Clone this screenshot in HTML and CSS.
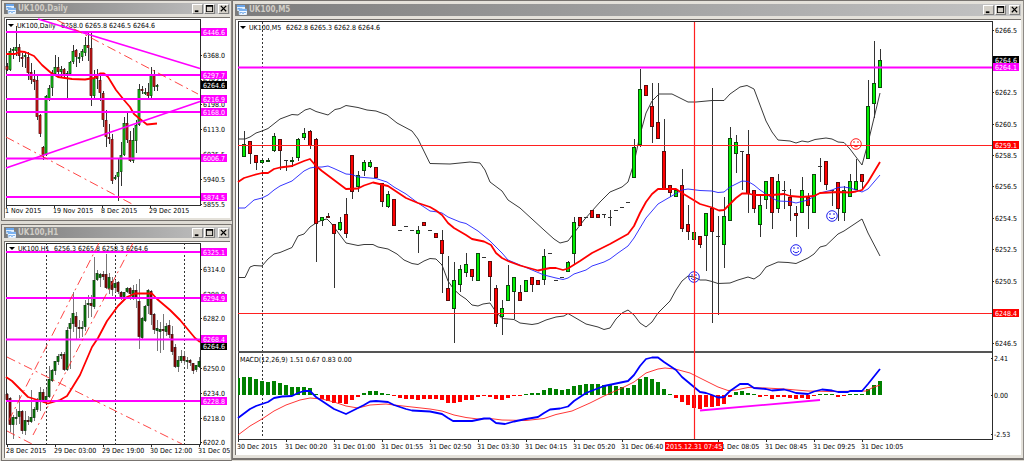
FILE: index.html
```html
<!DOCTYPE html>
<html lang="en">
<head>
<meta charset="utf-8">
<title>UK100 charts</title>
<link rel="stylesheet" href="styles.css">
</head>
<body>
<svg class="defs" aria-hidden="true">
  <symbol id="icon-chart" viewBox="0 0 10 10">
    <rect x="0" y="0" width="8" height="6" rx="1" fill="#e8f2fc"/>
    <rect x="0" y="0" width="8" height="2" fill="#6ba6ea"/>
    <path d="M1 5V3l1 1 1-1 1 2 1-2" fill="none" stroke="#6ba6ea"/>
    <rect x="2" y="4" width="8" height="6" rx="1" fill="#f4f9ff" stroke="#b4d4f4" stroke-width=".5"/>
    <rect x="2" y="4" width="8" height="2" fill="#7bb2f0"/>
    <path d="M3 9V7l1 1 1-1 1 2 1-2 1 1 1-1" fill="none" stroke="#6ba6ea" stroke-width=".8"/>
  </symbol>
  <symbol id="icon-min" viewBox="0 0 10 9"><path d="M2 6h4v2H2z"/></symbol>
  <symbol id="icon-max" viewBox="0 0 10 9"><path d="M1 0h8v8H1zM2 2v5h6V2z" fill-rule="evenodd"/></symbol>
  <symbol id="icon-close" viewBox="0 0 10 9"><path d="M2 1l6 6M8 1L2 7" stroke="#000" stroke-width="1.4" fill="none"/></symbol>
  <symbol id="smile" viewBox="0 0 12 12">
    <circle cx="6" cy="6" r="5.3" fill="none" stroke="currentColor"/>
    <path d="M4 3v2M8 3v2" stroke="currentColor"/>
    <path d="M3 7q3 3.5 6 0" fill="none" stroke="currentColor"/>
  </symbol>
</svg>
<main class="workspace">
  <div class="column">
    <section class="window">
      <header class="titlebar">
        <svg class="app-icon" aria-hidden="true"><use href="#icon-chart"/></svg>
        <h2 class="title">UK100,Daily</h2>
        <button class="control" aria-label="Minimize"><svg><use href="#icon-min"/></svg></button>
        <button class="control" aria-label="Maximize"><svg><use href="#icon-max"/></svg></button>
        <button class="control close" aria-label="Close"><svg><use href="#icon-close"/></svg></button>
      </header>
      <div class="client"><svg class="chart" id="daily" viewBox="5 18 225 200"></svg></div>
    </section>
    <section class="window">
      <header class="titlebar">
        <svg class="app-icon" aria-hidden="true"><use href="#icon-chart"/></svg>
        <h2 class="title">UK100,H1</h2>
        <button class="control" aria-label="Minimize"><svg><use href="#icon-min"/></svg></button>
        <button class="control" aria-label="Maximize"><svg><use href="#icon-max"/></svg></button>
        <button class="control close" aria-label="Close"><svg><use href="#icon-close"/></svg></button>
      </header>
      <div class="client"><svg class="chart" id="hourly" viewBox="5 242 225 216"></svg></div>
    </section>
  </div>
  <section class="window wide">
    <header class="titlebar">
      <svg class="app-icon" aria-hidden="true"><use href="#icon-chart"/></svg>
      <h2 class="title">UK100,M5</h2>
      <button class="control" aria-label="Minimize"><svg><use href="#icon-min"/></svg></button>
      <button class="control" aria-label="Maximize"><svg><use href="#icon-max"/></svg></button>
      <button class="control close" aria-label="Close"><svg><use href="#icon-close"/></svg></button>
    </header>
    <div class="client"><svg class="chart" id="minutes" viewBox="236 20 785 435"></svg></div>
  </section>
</main>
<script src="charts.js"></script>
</body>
</html>
```

FILE: styles.css
```css
* { box-sizing: border-box; }

body {
  margin: 0;
  background: #dedbd4;
  font-family: "DejaVu Sans Condensed", "DejaVu Sans", sans-serif;
  font-size: 7px;
  color: #000;
}

.defs { position: absolute; width: 0; height: 0; }

.workspace {
  display: grid;
  grid-template-columns: 232fr 792fr;
  align-items: start;
}

.column {
  display: flex;
  flex-direction: column;
  gap: 3px;
  padding-left: 1px;
}

.window {
  padding: 2px 1px 2px 2px;
  background: #e4e1da;
  border: 1px solid #77736f;
  border-right-color: #8c8985;
}

.wide {
  padding: 3px 2px 3px 2px;
  border-bottom-width: 2px;
}

.titlebar {
  display: flex;
  align-items: center;
  height: 11px;
  margin-bottom: 3px;
  padding: 0 1px 0 2px;
  background: linear-gradient(90deg, #7c7c7c, #c4c4c4);
}

.wide .titlebar { height: 12px; }

.app-icon { width: 10px; height: 10px; margin-right: 2px; }

.title {
  flex: 1;
  margin: 0;
  font-size: 8px;
  line-height: 10px;
  font-weight: bold;
  color: #d0cdc6;
}

.control {
  width: 11px;
  height: 10px;
  padding: 0;
  border: 1px solid;
  border-color: #fff #808080 #808080 #fff;
  background: #d4d0c8;
  line-height: 0;
}

.control svg { width: 100%; height: 100%; }
.control + .control { margin-left: 1px; }
.control.close { margin-left: 3px; }

.client {
  background: #fff;
  border-top: 1px solid #77736f;
  border-left: 1px solid #77736f;
}

.chart { display: block; width: 100%; height: auto; }
.chart text { font-size: 7px; fill: #000; white-space: pre; }
.chart text.light { fill: #fff; }

.frame { fill: none; stroke: #2c2c2c; shape-rendering: crispEdges; }
.tick { stroke: #2c2c2c; shape-rendering: crispEdges; }
.divider { stroke: #555; stroke-width: 2; }
.session { stroke: #333; stroke-dasharray: 2 2; shape-rendering: crispEdges; }
.line { fill: none; stroke-linejoin: round; }
.band { stroke: #222; stroke-width: 0.9; }
.fast { stroke: #ff0000; stroke-width: 1.8; }
.slow { stroke: #2020ff; stroke-width: 0.9; }
.macd { stroke: #0000ff; stroke-width: 1.8; }
.signal { stroke: #ff2020; stroke-width: 0.9; }
.level { stroke: #ff00ff; stroke-width: 1.8; }
.stop { stroke: #ff2020; stroke-width: 1.2; }
.channel { stroke: #ff3030; stroke-width: 0.9; stroke-dasharray: 9 4 2 4; fill: none; }
.buy { color: #2020f0; }
.sell { color: #ff2020; }

.wick { stroke: #333; shape-rendering: crispEdges; }
.soft .wick { stroke: #777; }
.up { fill: #00f000; stroke: #0c4a0c; }
.down { fill: #ff0000; stroke: #5a0c0c; }
.narrow .up { fill: #18d818; stroke-width: 0.8; }
.narrow .down { fill: #e01818; stroke-width: 0.8; }
.soft .up { fill: #008a00; stroke: #103810; }
.soft .down { fill: #a00000; stroke: #381010; }
.bar-up { fill: #008000; }
.bar-down { fill: #ff0000; }
```

FILE: charts.js
```js
const NS = 'http://www.w3.org/2000/svg';

function add(parent, tag, attrs, text) {
  const el = document.createElementNS(NS, tag);
  for (const key in attrs) el.setAttribute(key, attrs[key]);
  if (text !== undefined) el.textContent = text;
  parent.appendChild(el);
  return el;
}

const seg = (svg, cls, x1, y1, x2, y2) => add(svg, 'line', { class: cls, x1, y1, x2, y2 });
const curve = (svg, cls, points) => add(svg, 'polyline', { class: 'line ' + cls, points });
const label = (svg, x, y, text, cls) => add(svg, 'text', { x, y: y + 3, class: cls || '' }, text);

// Rows hold: high, body top, body bottom, low, kind (g, r, or d for no body).
function candles(svg, startX, step, half, cls, rows) {
  const g = add(svg, 'g', { class: cls });
  rows.trim().split('|').forEach((row, i) => {
    const [hi, top, bottom, low, kind] = row.trim().split(/\s+/);
    const x = startX + i * step;
    if (hi !== low) seg(g, 'wick', x, +hi, x, +low);
    if (kind === 'd') seg(g, 'wick', x - 2, +top, x + 2, +top);
    else add(g, 'rect', { class: kind === 'g' ? 'up' : 'down', x: x - half, y: +top + 0.5,
      width: half * 2, height: Math.max(bottom - top - 1, 1) });
  });
}

function frame(svg, x, y, right, bottom) {
  add(svg, 'rect', { class: 'frame', x, y, width: right - x, height: bottom - y });
}

// Axis entries: [y, text, optional box colour]; later entries cover earlier ones.
function axis(svg, x, width, entries) {
  entries.forEach(([y, text, fill]) => {
    if (fill) add(svg, 'rect', { x: x + 1, y: y - 4, width, height: 8, fill });
    else seg(svg, 'tick', x, y, x + 2, y);
    label(svg, x + 3, y, text, fill ? 'light' : '');
  });
}

function times(svg, y, frameY, entries) {
  entries.forEach(([x, text]) => {
    seg(svg, 'tick', x + 1, frameY, x + 1, frameY + 3);
    label(svg, x, y, text);
  });
}

function heading(svg, x, y, name, valuesX, values) {
  add(svg, 'path', { d: `M${x} ${y - 1}h6l-3 3z` });
  label(svg, x + 9, y, name);
  label(svg, valuesX, y, values);
}

const PINK = '#ff00ff', BLACK = '#000', RED = '#ff0000';

function daily() {
  const s = document.getElementById('daily');
  frame(s, 6, 19, 200, 205);
  candles(s, 7, 3, 1, 'narrow', `63 66 70 71 r|48 51 70 71 g|47 49 51 59 g|26 47 51 56 g|44 47 56 62 r|53 57 59 67 r|52 55 57 68 g|
52 57 73 80 r|63 72 80 84 r|70 79 82 90 r|75 80 117 120 r|114 115 134 137 r|146 147 155 160 r|95 96 155 156 g|85 88 99 101 g|
70 73 88 96 g|55 67 74 75 g|57 67 72 75 r|66 69 72 77 g|68 69 74 78 r|71 73 74 98 g|61 62 74 75 g|45 51 62 64 g|49 50 57 67 r|
53 57 59 63 g|49 51 57 61 g|37 45 53 56 g|33 45 48 61 r|33 48 96 106 r|70 78 96 98 g|69 75 79 89 r|75 80 93 101 r|91 93 120 127 r|
110 120 137 147 r|124 137 139 144 r|134 139 181 184 r|175 177 179 180 g|159 172 177 201 g|142 155 172 186 g|117 123 155 156 g|
112 123 140 143 r|131 140 161 162 r|128 140 161 163 g|120 125 141 153 g|84 89 125 126 g|86 89 91 94 r|88 92 94 95 g|83 92 96 98 r|
67 75 96 98 g|70 75 87 91 r|84 85 87 91 g`);
  curve(s, 'fast', '6,54 15,54 20,51.5 25,52 34,56 42,65 50,72 58,77 72,79 85,79.5 94,78 100,73.5 104,73.5 108,77 116,90 124,100 130,107 134,114 140,119 147,124.5 157,123.5');
  heading(s, 8, 25, 'UK100,Daily', 61, '6258.0 6265.8 6246.5 6264.6');
  [32, 75, 99, 112, 158.5, 197].forEach(y => seg(s, 'level', 6, y, 200, y));
  seg(s, 'level', 38, 19, 200, 68.5);
  seg(s, 'level', 6, 168, 200, 101.5);
  seg(s, 'channel', 57, 20, 198, 94);
  seg(s, 'channel', 6, 137, 132, 204);
  axis(s, 200, 26, [[55, '6368.0'], [80, '6283.0'], [104, '6198.0'], [129, '6113.0'], [154, '6025.5'], [179, '5940.5'], [204, '5855.5'],
    [32, '6446.6', PINK], [75, '6297.7', PINK], [85, '6264.6', BLACK], [99, '6216.9', PINK], [112, '6168.0', PINK],
    [158, '6006.7', PINK], [197, '5874.5', PINK]]);
  times(s, 210, 205, [[5, '1 Nov 2015'], [53, '19 Nov 2015'], [101, '8 Dec 2015'], [149, '29 Dec 2015']]);
}

function hourly() {
  const s = document.getElementById('hourly');
  frame(s, 6, 243, 200, 444);
  [46, 115, 184].forEach(x => seg(s, 'session', x, 243, x, 444));
  candles(s, 7, 3, 1, 'narrow soft', `393 394 400 400 r|397 398 425 432 r|415 417 425 439 g|409 417 418 425 g|395 411 417 424 g|
410 411 431 434 r|411 420 431 435 g|416 420 422 425 r|390 417 422 423 g|407 409 418 421 g|398 402 410 412 g|387 392 401 411 g|
389 392 400 403 r|389 396 401 403 g|366 379 397 398 g|369 370 381 382 g|361 361 371 375 g|354 356 362 365 g|352 354 356 359 g|
352 354 370 371 r|327 330 370 371 g|318 323 329 369 g|292 313 324 332 g|312 316 327 340 r|320 327 329 338 r|321 327 329 337 g|
300 305 327 331 g|295 303 305 318 g|295 303 306 317 r|257 280 307 309 g|270 273 280 281 g|273 274 278 287 g|271 274 277 280 r|
254 274 288 289 r|273 277 289 294 g|277 281 290 296 r|280 283 288 292 g|281 282 292 294 r|291 292 297 300 r|292 292 297 299 g|
287 288 292 293 g|287 288 294 300 r|285 290 298 300 g|284 290 299 308 r|279 301 337 349 r|317 318 338 340 g|305 306 321 322 g|
289 290 306 314 g|290 291 315 325 r|313 314 330 334 r|320 328 331 351 g|322 329 332 353 g|314 329 331 350 r|323 326 332 336 g|
320 325 335 338 r|326 334 352 355 r|344 347 367 368 r|356 360 367 372 g|350 356 361 363 g|351 356 361 365 r|357 360 362 369 g|
359 360 363 366 r|363 363 371 374 r|365 365 370 372 g|357 361 367 368 g`);
  curve(s, 'fast', '6,377 12,381 20,389 28,397 36,399.5 48,403.5 60,400 67,396 72,388 80,375 86,361 92,347 98,338 107,321 118,306 127,297 135,293.5 152,293.5 157,299 170,310 180,320 195,338 200,342');
  heading(s, 9, 248, 'UK100,H1', 54, '6256.3 6265.8 6258.3 6264.6');
  [252, 298, 339.5, 401].forEach(y => seg(s, 'level', 6, y, 200, y));
  seg(s, 'channel', 99, 243, 7, 424);
  seg(s, 'channel', 133, 243, 33, 435);
  seg(s, 'channel', 7, 357, 182, 444);
  seg(s, 'channel', 7, 431, 32, 444);
  axis(s, 200, 26, [[269, '6314.0'], [294, '6298.0'], [318, '6282.0'], [368, '6250.0'], [393, '6234.0'], [418, '6218.0'], [442, '6202.0'],
    [252, '6325.1', PINK], [298, '6294.9', PINK], [346, '6264.6', BLACK], [339, '6268.4', PINK], [401, '6228.8', PINK]]);
  times(s, 450, 444, [[6, '28 Dec 2015'], [54, '29 Dec 03:00'], [102, '29 Dec 19:00'], [150, '30 Dec 12:00'], [198, '31 Dec 05']]);
}

function minutes() {
  const s = document.getElementById('minutes');
  frame(s, 238, 21, 992, 439);
  seg(s, 'session', 262, 22, 262, 438);
  seg(s, 'tick', 238, 109, 238, 172);
  curve(s, 'band', '238,139 245,139 250,137 256,133 262,131 268,128.5 280,119 292,114.5 298,115 305,110 310,108.5 316,111.5 328,115 335,109.5 340,108.5 346,105.5 358,107.5 367,110 376,111 387,115 397,123 412,131 418,139 430,163.5 450,164 470,162 480,163 485,170 490,182 502,191 508,200 520,208 532,219 544,230 554,239 560,243 568,241 574,233 584,220 592,211 600,202 610,192 622,187 628,182 634,163 640,135 646,113 652,101 659,94 672,94 680,98 688,102 696,102 712,100.5 724,100.5 730,94 740,87 747,85.5 754,89 760,105 766,121 772,132 778,140 790,141 796,143 802,141 808,142 815,139.5 826,138 832,139 838,142 844,142.5 850,149 862,165 868,143 880,93');
  curve(s, 'band', '238,277.5 245,277.5 250,267 254,265.5 262,266 268,259 274,254 280,252.5 292,247.5 298,236 304,234 310,227 316,223 322,220 327,219 331,223 346,243 358,245.5 364,244.5 373,244.5 378,247 388,249 397,254 404,260 412,263.5 418,264.5 424,261 430,258.5 436,259 442,265 448,281 454,289.5 460,295 466,299 472,305 478,306 483,304 490,303 496,312 502,318.5 514,319.5 520,323 532,324.5 538,323.5 546,320 556,317 564,316 568,313.5 574,317 586,324 598,327 604,329.5 610,328 616,319 622,313 628,310 634,315 640,323 646,327 652,322 658,313 670,301 676,290 682,281 688,276 694,277 700,280 706,280 712,281.5 718,283.5 730,283 738,280 748,277 754,279 760,275 766,267 778,262 788,262.5 796,263.5 808,258 814,254 820,247 826,245.5 838,234 844,231 862,219 868,233 880,256');
  candles(s, 244, 6, 1.5, '', `131 144 157 157 g|141 141 154 164 r|155 155 163 170 r|159 160 163 163 g|158 160 162 162 g|133 136 151 152 g|
139 139 151 170 r|160 160 160 171 d|157 160 162 167 g|138 139 158 161 g|128 133 138 140 g|130 131 146 149 r|138 139 224 262 r|
217 217 221 226 g|213 216 218 218 r|224 224 234 288 r|217 222 230 231 g|198 214 234 238 r|155 155 192 199 r|171 175 187 192 g|
160 162 171 176 g|160 162 167 168 g|167 167 178 178 r|183 183 202 207 r|191 194 207 208 g|199 199 226 226 r|230 230 230 230 d|
226 226 226 226 d|230 230 230 230 d|226 230 234 253 g|222 222 226 226 r|230 230 230 230 d|233 233 238 238 r|230 240 254 293 r|
256 288 301 301 r|262 280 309 343 g|265 269 285 292 g|253 264 273 277 g|269 269 277 281 r|253 253 281 281 g|257 257 257 257 d|
261 261 277 301 r|285 288 324 327 r|300 308 317 335 g|265 285 301 301 g|277 277 292 319 g|285 292 301 301 r|280 280 292 292 g|
277 277 285 292 r|280 280 285 285 r|249 256 280 285 g|253 253 253 253 d|280 280 280 280 d|277 277 277 277 d|261 262 272 272 g|
217 222 254 264 g|217 217 226 226 r|217 217 217 217 d|210 210 218 218 r|214 214 218 218 r|214 214 214 218 d|210 217 217 226 d|
210 210 210 210 d|207 207 207 207 d|202 202 202 202 d|139 147 178 178 g|69 89 145 147 g|85 85 96 96 r|83 106 127 143 r|
83 122 139 139 r|119 151 190 190 r|185 185 193 197 r|190 190 197 197 g|169 185 229 232 r|205 224 232 240 r|232 232 240 240 g|
236 236 245 248 r|213 213 236 271 g|88 208 232 323 r|216 236 236 315 d|197 216 245 268 g|127 138 221 221 g|135 142 154 173 g|
151 151 151 190 d|130 154 194 213 r|190 190 209 213 r|194 205 225 237 g|181 181 200 209 g|177 177 213 229 r|174 181 209 213 g|
181 190 190 209 d|189 197 206 221 r|206 213 216 237 r|177 190 213 213 g|193 197 206 229 r|174 174 213 213 g|158 166 166 182 d|
161 161 185 190 r|190 190 190 206 d|182 182 209 221 r|186 190 213 221 g|174 181 197 197 g|159 181 190 190 g|174 174 182 189 r|
80 106 159 159 g|41 83 104 118 g|49 60 88 88 g`);
  curve(s, 'slow', '238,208 245,208 254,200 262,198 268,195 274,190 280,186 292,181 298,176 304,171 310,168 316,167 322,167 328,166 334,168.5 346,174 352,174.5 358,177 376,178.5 387,182 394,187 406,194 418,203 430,211 438,212 442,213 448,217 460,222 466,223.5 478,231 490,241 502,253 508,260 520,265 532,270 544,275 556,278 563,279.5 568,278 574,274 586,270 592,266 604,262 610,259 618,253 628,246 634,238 646,218 658,204 670,197 682,190 688,189 700,190.5 712,191 718,192.5 724,192 730,187 742,181 748,181.5 754,185 760,190 772,198 778,201 790,201.5 796,203 808,200 820,193 832,190 838,187.5 844,187 850,188 856,190 862,192 868,189 880,175');
  curve(s, 'fast', '238,182 244,178 254,175 262,173 268,173 274,169 280,167.5 292,166 298,163.5 304,161 310,159 316,166 322,171 334,180 346,189 358,188.5 364,185.5 373,182.5 388,186 394,190 406,198 418,203 430,207 436,210.5 442,215 448,223 454,228 466,235 472,239 484,241.5 491,245 496,253 502,258 508,261 520,265.5 538,270.5 550,268 556,268 563,270 568,268.5 580,261 592,253 600,249 610,244 628,234 634,226 640,213 646,202 652,194 658,189 676,189 682,193 700,204 712,207.5 719,210.5 724,210 730,204 736,198 742,193.5 748,193.5 754,195 772,195 784,194 790,196 802,197 814,196 820,193 838,192 850,192.5 856,191.5 862,190 868,182 880,162');
  seg(s, 'level', 238, 67.5, 992, 67.5);
  seg(s, 'stop', 238, 145.5, 992, 145.5);
  seg(s, 'stop', 238, 313.5, 992, 313.5);
  [[694, 277, 'buy'], [796, 250, 'buy'], [832, 216, 'buy'], [856, 144, 'sell']].forEach(([x, y, cls]) =>
    add(s, 'use', { href: '#smile', x: x - 6, y: y - 6, width: 12, height: 12, class: cls }));
  heading(s, 240, 27, 'UK100,M5', 286, '6262.8 6265.3 6262.8 6264.6');

  // MACD pane: histogram edges are measured against the zero line.
  const zero = 395;
  [378,377,377,379,381,382,381,383,385,387,387,387,388,394,399,401,403,403,404,400,397,393,391,391,393,394,396,398,399,399,400,399,
   399,399,400,403,403,402,400,400,397,396,397,399,400,398,396,396,394,393,393,390,388,389,390,389,386,385,384,384,384,385,385,386,
   387,388,385,379,377,379,382,389,394,398,402,405,408,409,407,407,406,404,397,392,391,393,394,397,396,399,397,397,398,399,398,399,
   396,394,394,394,397,396,394,394,394,389,385,381].forEach((v, i) => {
    const x = Math.max(238 + i * 6 - 2, 238);
    add(s, 'rect', { class: v < zero ? 'bar-up' : 'bar-down', x, y: Math.min(v, zero), width: i ? 4 : 2, height: Math.abs(v - zero) });
  });
  curve(s, 'signal', '238,435 250,426 262,419 274,411 286,405 300,400 310,398 322,399 334,402 346,406 358,408 370,405 386,404 394,405 412,407 430,409 442,411 454,415 466,417.5 478,419 490,418.5 502,420 526,420.5 544,418.5 556,414.5 572,411 590,403 604,396 622,388 634,382 646,373 658,369 665,368 675,369 690,373 706,381 718,387 728,390.5 736,390 748,387.5 766,388 784,389 808,391 832,391.5 866,391 874,387 880,385');
  curve(s, 'macd', '238,418 250,409 256,406 268,402 274,398 282,396.5 292,396 298,393 304,391 310,391 316,397 322,401 334,409 346,414 352,411 358,408 364,405 370,401.5 376,401 388,402 394,405 406,409 412,410.5 430,411.5 442,414 448,418 453,421 472,421 484,418.5 490,418.5 496,423 505,424 514,421.5 526,419 538,417 544,413 550,409.5 560,408.5 568,406.5 574,401 586,393 604,386 616,383.5 628,381 634,375 640,366 646,359 652,357.5 658,357.5 664,362 676,370 682,377 700,392 706,393 712,395 718,397.5 724,397 730,391 740,384 748,384 754,388 766,389 772,390.5 784,389.5 790,391 796,393 808,394 814,391.5 822,389.5 832,390.5 838,392 848,392 850,391 862,391 868,384 880,369');
  seg(s, 'level', 700, 410.5, 820, 400);
  seg(s, 'divider', 238, 352, 992, 352);
  label(s, 240, 359, 'MACD(12,26,9) 1.51 0.67 0.83 0.00');
  seg(s, 'stop', 694.5, 22, 694.5, 439);

  axis(s, 992, 26, [[30, '6266.5'], [92, '6262.5'], [124, '6260.5'], [155, '6258.5'], [186, '6256.5'], [218, '6254.5'], [249, '6252.5'],
    [281, '6250.5'], [343, '6246.5'], [60, '6264.6', BLACK], [67, '6264.1', PINK], [145, '6259.1', RED], [313, '6248.4', RED]]);
  axis(s, 991, 26, [[358, '2.41'], [395, '0.00'], [434, '-2.53']]);
  times(s, 446, 439, [[237, '30 Dec 2015'], [285, '31 Dec 00:20'], [333, '31 Dec 01:00'], [381, '31 Dec 01:55'], [429, '31 Dec 02:50'],
    [477, '31 Dec 03:30'], [525, '31 Dec 04:15'], [573, '31 Dec 05:20'], [621, '31 Dec 06:40'], [717, '31 Dec 08:05'],
    [765, '31 Dec 08:45'], [813, '31 Dec 09:25'], [861, '31 Dec 10:05']]);
  add(s, 'rect', { x: 665, y: 442, width: 58, height: 9, fill: RED });
  label(s, 666, 446, '2015.12.31 07:45', 'light');
}

daily();
hourly();
minutes();
```
